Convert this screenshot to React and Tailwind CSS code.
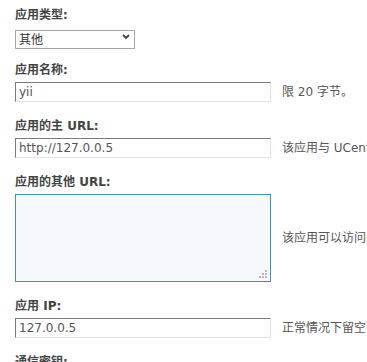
import React from 'react';

const font = { fontFamily: '"DejaVu Sans", "Noto Sans CJK SC", sans-serif' };

const Label = ({ children }) => (
  <div className="h-[18px] leading-[18px] text-[12px] font-bold text-[#444] mb-[3px]">{children}</div>
);

const Help = ({ children }) => (
  <span className="ml-[11px] text-[12px] text-[#555] whitespace-nowrap">{children}</span>
);

const inputCls =
  'shrink-0 w-[256px] h-[20px] px-[3px] text-[12px] text-[#555] bg-white outline-none border border-t-[#7a7a7a] border-l-[#7a7a7a] border-r-[#e3e3e3] border-b-[#e3e3e3]';

const Field = ({ label, value, help }) => (
  <div className="mb-[15px]">
    <Label>{label}</Label>
    <div className="flex items-center">
      <input className={inputCls} style={font} defaultValue={value} />
      <Help>{help}</Help>
    </div>
  </div>
);

export default function App() {
  return (
    <div className="w-[367px] h-[362px] overflow-hidden bg-white pl-[15px] pt-[6px]" style={font}>
      <div className="mb-[15px]">
        <Label>应用类型:</Label>
        <div className="relative w-[120px] h-[19px]">
          <select
            className="appearance-none w-full h-full pl-[3px] text-[12px] text-[#333] bg-white border border-[#a5a5a5] outline-none"
            style={font}
            defaultValue="other"
          >
            <option value="other">其他</option>
          </select>
          <svg className="absolute right-[5px] top-[7px]" width="8" height="6" viewBox="0 0 8 6">
            <path d="M1 1 L4 4 L7 1" stroke="#444" strokeWidth="1.8" fill="none" />
          </svg>
        </div>
      </div>

      <Field label="应用名称:" value="yii" help="限 20 字节。" />
      <Field label="应用的主 URL:" value="http://127.0.0.5" help="该应用与 UCenter 通信的接口 URL" />

      <div className="mb-[15px]">
        <Label>应用的其他 URL:</Label>
        <div className="flex items-center">
          <div className="relative shrink-0">
            <textarea
              className="block w-[256px] h-[88px] resize-none bg-[#f5f8fc] border border-[#3a97ad] outline-none"
            />
            <svg className="absolute right-[4px] bottom-[4px]" width="9" height="9" viewBox="0 0 9 9">
              <rect x="7" y="1" width="2" height="2" fill="#bbb" />
              <rect x="4" y="4" width="2" height="2" fill="#bbb" />
              <rect x="7" y="4" width="2" height="2" fill="#bbb" />
              <rect x="1" y="7" width="2" height="2" fill="#bbb" />
              <rect x="4" y="7" width="2" height="2" fill="#bbb" />
              <rect x="7" y="7" width="2" height="2" fill="#bbb" />
            </svg>
          </div>
          <Help>该应用可以访问的其他 URL</Help>
        </div>
      </div>

      <Field label="应用 IP:" value="127.0.0.5" help="正常情况下留空即可" />

      <Label>通信密钥:</Label>
    </div>
  );
}
